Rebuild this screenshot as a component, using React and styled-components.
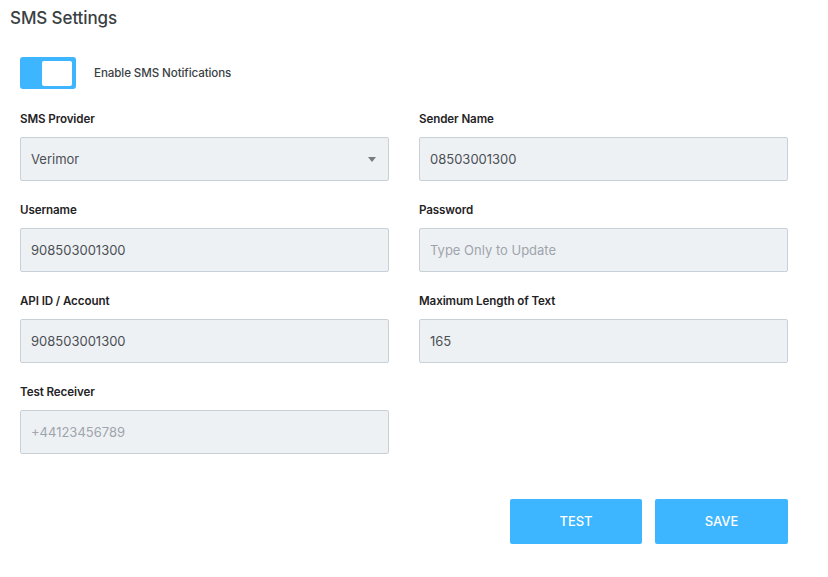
import React, { useState } from 'react';
import styled, { createGlobalStyle } from 'styled-components';

const GlobalStyle = createGlobalStyle`
  body {
    margin: 0;
    background: #ffffff;
    font-family: Inter, "Noto Sans", sans-serif;
    color: #2b2f33;
  }
`;

const Page = styled.div`
  width: 828px;
  padding: 8px 10px 0 10px;
  box-sizing: border-box;
`;

const Title = styled.h2`
  margin: 0;
  font-size: 17px;
  font-weight: 500;
  color: #3a3f44;
  line-height: 20px;
  letter-spacing: -0.1px;
`;

const Body = styled.div`
  padding: 29px 30px 0 10px;
`;

const ToggleRow = styled.label`
  display: flex;
  align-items: center;
  gap: 18px;
  cursor: pointer;
`;

const Switch = styled.span`
  width: 56px;
  height: 32px;
  box-sizing: border-box;
  padding: 4px 4px 3px;
  border-radius: 3px;
  background: ${p => (p.$on ? '#3db5ff' : '#c5ced6')};
  display: flex;
  justify-content: ${p => (p.$on ? 'flex-end' : 'flex-start')};
`;

const Knob = styled.span`
  width: 30px;
  height: 25px;
  background: #ffffff;
  border-radius: 2px;
`;

const ToggleText = styled.span`
  font-size: 11.6px;
  font-weight: 500;
  color: #3a3f44;
  letter-spacing: -0.1px;
`;

const Grid = styled.div`
  display: grid;
  grid-template-columns: 369px 369px;
  column-gap: 30px;
  row-gap: 19px;
  margin-top: 20px;
`;

const Field = styled.div`
  display: flex;
  flex-direction: column;
  gap: 10px;
`;

const Label = styled.div`
  padding-top: 2px;
  font-size: 11.6px;
  font-weight: 600;
  color: #1f2326;
  line-height: 16px;
  letter-spacing: -0.1px;
`;

const Input = styled.input`
  height: 44px;
  box-sizing: border-box;
  border: 1px solid #c8d1d8;
  border-radius: 2px;
  background: #eef1f4;
  padding: 0 10px;
  font-family: inherit;
  font-size: 13px;
  color: #4a4f54;
  outline: none;
  &::placeholder {
    color: #9ea5ac;
  }
`;

const SelectBox = styled.div`
  height: 44px;
  box-sizing: border-box;
  border: 1px solid #c8d1d8;
  border-radius: 2px;
  background: #eef1f4;
  padding: 0 12px 0 10px;
  display: flex;
  align-items: center;
  justify-content: space-between;
  font-size: 13px;
  color: #4a4f54;
`;

const Caret = styled.span`
  width: 0;
  height: 0;
  border-left: 4px solid transparent;
  border-right: 4px solid transparent;
  border-top: 5px solid #777c80;
`;

const Actions = styled.div`
  display: flex;
  justify-content: flex-end;
  gap: 13px;
  margin-top: 45px;
`;

const Button = styled.button`
  width: ${p => p.$w}px;
  height: 45px;
  padding: 0 0 2px;
  border: none;
  border-radius: 2px;
  background: #3db5ff;
  color: #ffffff;
  font-family: inherit;
  font-size: 13px;
  font-weight: 500;
  cursor: pointer;
`;

const fields = [
  { label: 'Username', value: '908503001300' },
  { label: 'Password', placeholder: 'Type Only to Update', type: 'password' },
  { label: 'API ID / Account', value: '908503001300' },
  { label: 'Maximum Length of Text', value: '165' },
  { label: 'Test Receiver', placeholder: '+44123456789' },
];

export default function App() {
  const [on, setOn] = useState(true);
  return (
    <Page>
      <GlobalStyle />
      <Title>SMS Settings</Title>
      <Body>
        <ToggleRow onClick={() => setOn(!on)}>
          <Switch $on={on}>
            <Knob />
          </Switch>
          <ToggleText>Enable SMS Notifications</ToggleText>
        </ToggleRow>
        <Grid>
          <Field>
            <Label>SMS Provider</Label>
            <SelectBox>
              Verimor
              <Caret />
            </SelectBox>
          </Field>
          <Field>
            <Label>Sender Name</Label>
            <Input defaultValue="08503001300" />
          </Field>
          {fields.map(f => (
            <Field key={f.label}>
              <Label>{f.label}</Label>
              <Input
                type={f.type || 'text'}
                defaultValue={f.value}
                placeholder={f.placeholder}
              />
            </Field>
          ))}
        </Grid>
        <Actions>
          <Button $w={132}>TEST</Button>
          <Button $w={133}>SAVE</Button>
        </Actions>
      </Body>
    </Page>
  );
}
